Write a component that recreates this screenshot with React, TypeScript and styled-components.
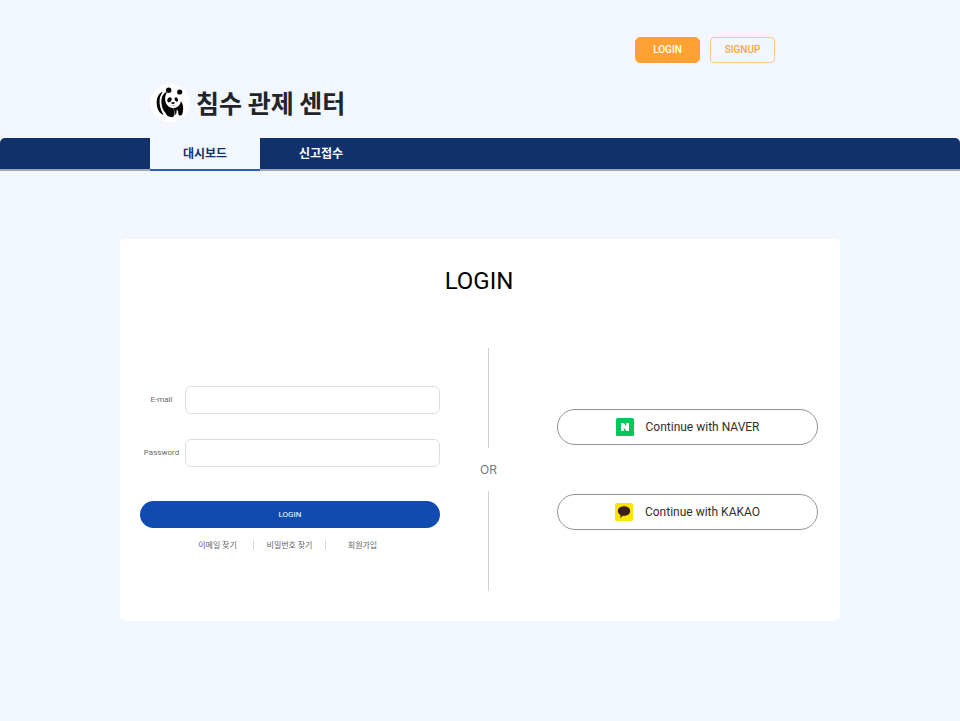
import React from "react";
import styled, { createGlobalStyle } from "styled-components";

const GlobalStyle = createGlobalStyle`
  *, *::before, *::after { box-sizing: border-box; }
  body {
    margin: 0;
    background: #f1f6ff;
    color: #212529;
    font-family: Roboto, "Noto Sans CJK KR", sans-serif;
  }
  button, input { font-family: inherit; }
`;

const Page = styled.div`
  min-height: 100vh;
  padding-bottom: 40px;
`;

const TopBar = styled.div`
  display: flex;
  justify-content: flex-end;
  gap: 10px;
  padding: 37px 185px 0 0;
`;

const AccountButton = styled.button<{ $filled?: boolean }>`
  width: 65px;
  height: 26px;
  padding: 0;
  border: 1px solid ${(p) => (p.$filled ? "#ffa233" : "#fdc888")};
  border-radius: ${(p) => (p.$filled ? 5 : 4)}px;
  background: ${(p) => (p.$filled ? "#ffa233" : "transparent")};
  color: ${(p) => (p.$filled ? "#fff" : "#fba53f")};
  font-size: 10px;
  font-weight: 500;
  line-height: 12px;
  cursor: pointer;
`;

const Brand = styled.a`
  display: flex;
  align-items: flex-start;
  gap: 6px;
  width: fit-content;
  height: 40px;
  margin: 21px 0 14px 150px;
  color: #212529;
  text-decoration: none;
`;

const BrandName = styled.h1`
  margin: 0;
  font-family: "Noto Sans CJK KR", sans-serif;
  font-size: 25px;
  font-weight: 700;
  line-height: 36px;
`;

const Nav = styled.nav`
  display: flex;
  gap: 6px;
  height: 33px;
  padding-left: 150px;
  border-radius: 5px 5px 0 0;
  background: linear-gradient(#11316b 31px, #a0a5b0 31px);
`;

const Tab = styled.a<{ $active?: boolean }>`
  display: flex;
  align-items: center;
  justify-content: center;
  width: 110px;
  padding-bottom: 4px;
  background: ${(p) => (p.$active ? "linear-gradient(#f1f6ff 31px, #2860bf 31px)" : "none")};
  color: ${(p) => (p.$active ? "#11316b" : "#fff")};
  font-family: "Noto Sans CJK KR", sans-serif;
  font-size: 12px;
  font-weight: 700;
  text-decoration: none;
`;

const Card = styled.main`
  width: 75%;
  margin: 68px auto 0;
  padding: 26px 22px 30px 20px;
  border-radius: 5px;
  background: #fff;
`;

const Title = styled.h2`
  margin: 0 0 51px;
  color: #000;
  font-size: 24px;
  font-weight: 400;
  line-height: 32px;
  text-align: center;
`;

const Columns = styled.div`
  display: grid;
  grid-template-columns: minmax(0, 300fr) 97px minmax(0, 281fr);
`;

const Form = styled.form`
  padding-top: 38px;
`;

const Field = styled.div`
  display: grid;
  grid-template-columns: 45px 1fr;
  align-items: center;
  margin-bottom: 25px;
`;

const Label = styled.label`
  padding-right: 2px;
  color: #6b6b6b;
  font-size: 8px;
  line-height: 10px;
  text-align: center;
`;

const TextInput = styled.input`
  width: 100%;
  height: 28px;
  padding: 0 10px;
  border: 1px solid #dedede;
  border-radius: 6px;
  background: #fff;
  font-size: 12px;
`;

const SubmitButton = styled.button`
  display: block;
  width: 100%;
  height: 27px;
  margin-top: 34px;
  padding: 0;
  border: 0;
  border-radius: 14px;
  background: #104cb0;
  color: #fff;
  font-size: 8px;
  font-weight: 400;
  cursor: pointer;
`;

const HelpLinks = styled.div`
  display: grid;
  grid-template-columns: 72px 72px 74px;
  justify-content: center;
  margin-top: 12px;
`;

const HelpLink = styled.a`
  border-left: 1px solid #dcdcdc;
  color: #666;
  font-family: "Noto Sans CJK KR", sans-serif;
  font-size: 8px;
  line-height: 10px;
  text-align: center;
  text-decoration: none;
  &:first-child { border-left-color: transparent; }
`;

const Separator = styled.div`
  display: flex;
  flex-direction: column;
  align-items: center;
  gap: 13px;
  color: #777;
  font-family: Inter, sans-serif;
  font-size: 12px;
  line-height: 17px;
  &::before, &::after {
    content: "";
    width: 1px;
    height: 100px;
    background: #d0d0d0;
  }
`;

const Social = styled.div`
  display: flex;
  flex-direction: column;
  gap: 49px;
  padding: 61px 0 0 20px;
`;

const SocialButton = styled.button`
  display: flex;
  align-items: center;
  justify-content: center;
  gap: 12px;
  width: 100%;
  height: 36px;
  padding: 0;
  border: 1px solid #929292;
  border-radius: 18px;
  background: #fff;
  color: #2f2f2f;
  font-size: 12px;
  cursor: pointer;
`;

const PandaLogo = () => (
  <svg width="40" height="38" viewBox="0 0 40 38" aria-hidden="true">
    <ellipse cx="20" cy="19" rx="20" ry="19" fill="#fff" />
    <g fill="#050505">
      <path d="M11.800 8C8.300 10.200 6.300 14.500 6.700 19.500C7 25 9.200 29.600 13.600 30.800C11.500 27.500 9.900 23.500 9.600 19C9.400 14.500 10.200 11 12.600 8.300Z" />
      <path d="M15.600 8.200C12.600 10 11.200 13.600 11.400 18C11.600 22.600 13 26.200 15.400 28.800C16.500 31.500 18.500 33.400 22.500 33.200C24.500 32.400 24.900 29.800 24.400 27.100L22.700 24.200C19.700 23.700 17 21.800 15.800 18.700C14.600 15.500 14.800 11.500 17.100 8.600Z" />
      <path d="M22.700 24.200C28 23.600 30.200 21.200 30.800 17.200C33.200 19.700 34 25 32.300 30C31.400 32.300 28.700 31.900 28.300 30.100C28.500 28 27.900 26.400 26.700 25.600C26.700 28 26.500 30 25.200 31.500C25.500 29 25.100 26.500 22.700 24.200Z" />
      <circle cx="18.700" cy="6.300" r="2.700" />
      <circle cx="29.700" cy="8" r="2.600" />
      <ellipse cx="19.500" cy="15.800" rx="2" ry="2.700" transform="rotate(38 19.500 15.800)" />
      <ellipse cx="26.300" cy="15.500" rx="1.600" ry="2.300" transform="rotate(-28 26.300 15.500)" />
      <ellipse cx="23" cy="19" rx="1.700" ry="1.100" />
      <path d="M20 20.800Q23 22.800 26 20.500Q23.500 23.500 20 20.800Z" />
    </g>
  </svg>
);

const NaverIcon = () => (
  <svg width="18" height="18" viewBox="0 0 18 18" aria-hidden="true">
    <rect width="18" height="18" rx="1.500" fill="#06c65b" />
    <path d="M5 5H7.900L10.200 8.400V5H13V13H10.200L7.800 9.600V13H5Z" fill="#fff" />
  </svg>
);

const KakaoIcon = () => (
  <svg width="18" height="18" viewBox="0 0 18 18" aria-hidden="true">
    <rect width="18" height="18" rx="1.500" fill="#ffe600" />
    <path d="M9 3.300C5.400 3.300 2.800 5.300 2.800 8C2.800 9.800 3.900 11.200 5.500 12L5 14.700L8 12.700L9 12.800C12.500 12.800 15.200 10.700 15.200 8C15.200 5.300 12.500 3.300 9 3.300Z" fill="#3c1e1e" />
  </svg>
);

export default function App() {
  return (
    <>
      <GlobalStyle />
      <Page>
        <header>
          <TopBar>
            <AccountButton type="button" $filled>LOGIN</AccountButton>
            <AccountButton type="button">SIGNUP</AccountButton>
          </TopBar>
          <Brand href="#">
            <PandaLogo />
            <BrandName>침수 관제 센터</BrandName>
          </Brand>
          <Nav>
            <Tab href="#dashboard" $active>대시보드</Tab>
            <Tab href="#reports">신고접수</Tab>
          </Nav>
        </header>
        <Card>
          <Title>LOGIN</Title>
          <Columns>
            <Form>
              <Field>
                <Label htmlFor="email">E-mail</Label>
                <TextInput id="email" type="email" />
              </Field>
              <Field>
                <Label htmlFor="password">Password</Label>
                <TextInput id="password" type="password" />
              </Field>
              <SubmitButton type="submit">LOGIN</SubmitButton>
              <HelpLinks>
                <HelpLink href="#find-email">이메일 찾기</HelpLink>
                <HelpLink href="#find-password">비밀번호 찾기</HelpLink>
                <HelpLink href="#join">회원가입</HelpLink>
              </HelpLinks>
            </Form>
            <Separator>OR</Separator>
            <Social>
              <SocialButton type="button"><NaverIcon />Continue with NAVER</SocialButton>
              <SocialButton type="button"><KakaoIcon />Continue with KAKAO</SocialButton>
            </Social>
          </Columns>
        </Card>
      </Page>
    </>
  );
}
